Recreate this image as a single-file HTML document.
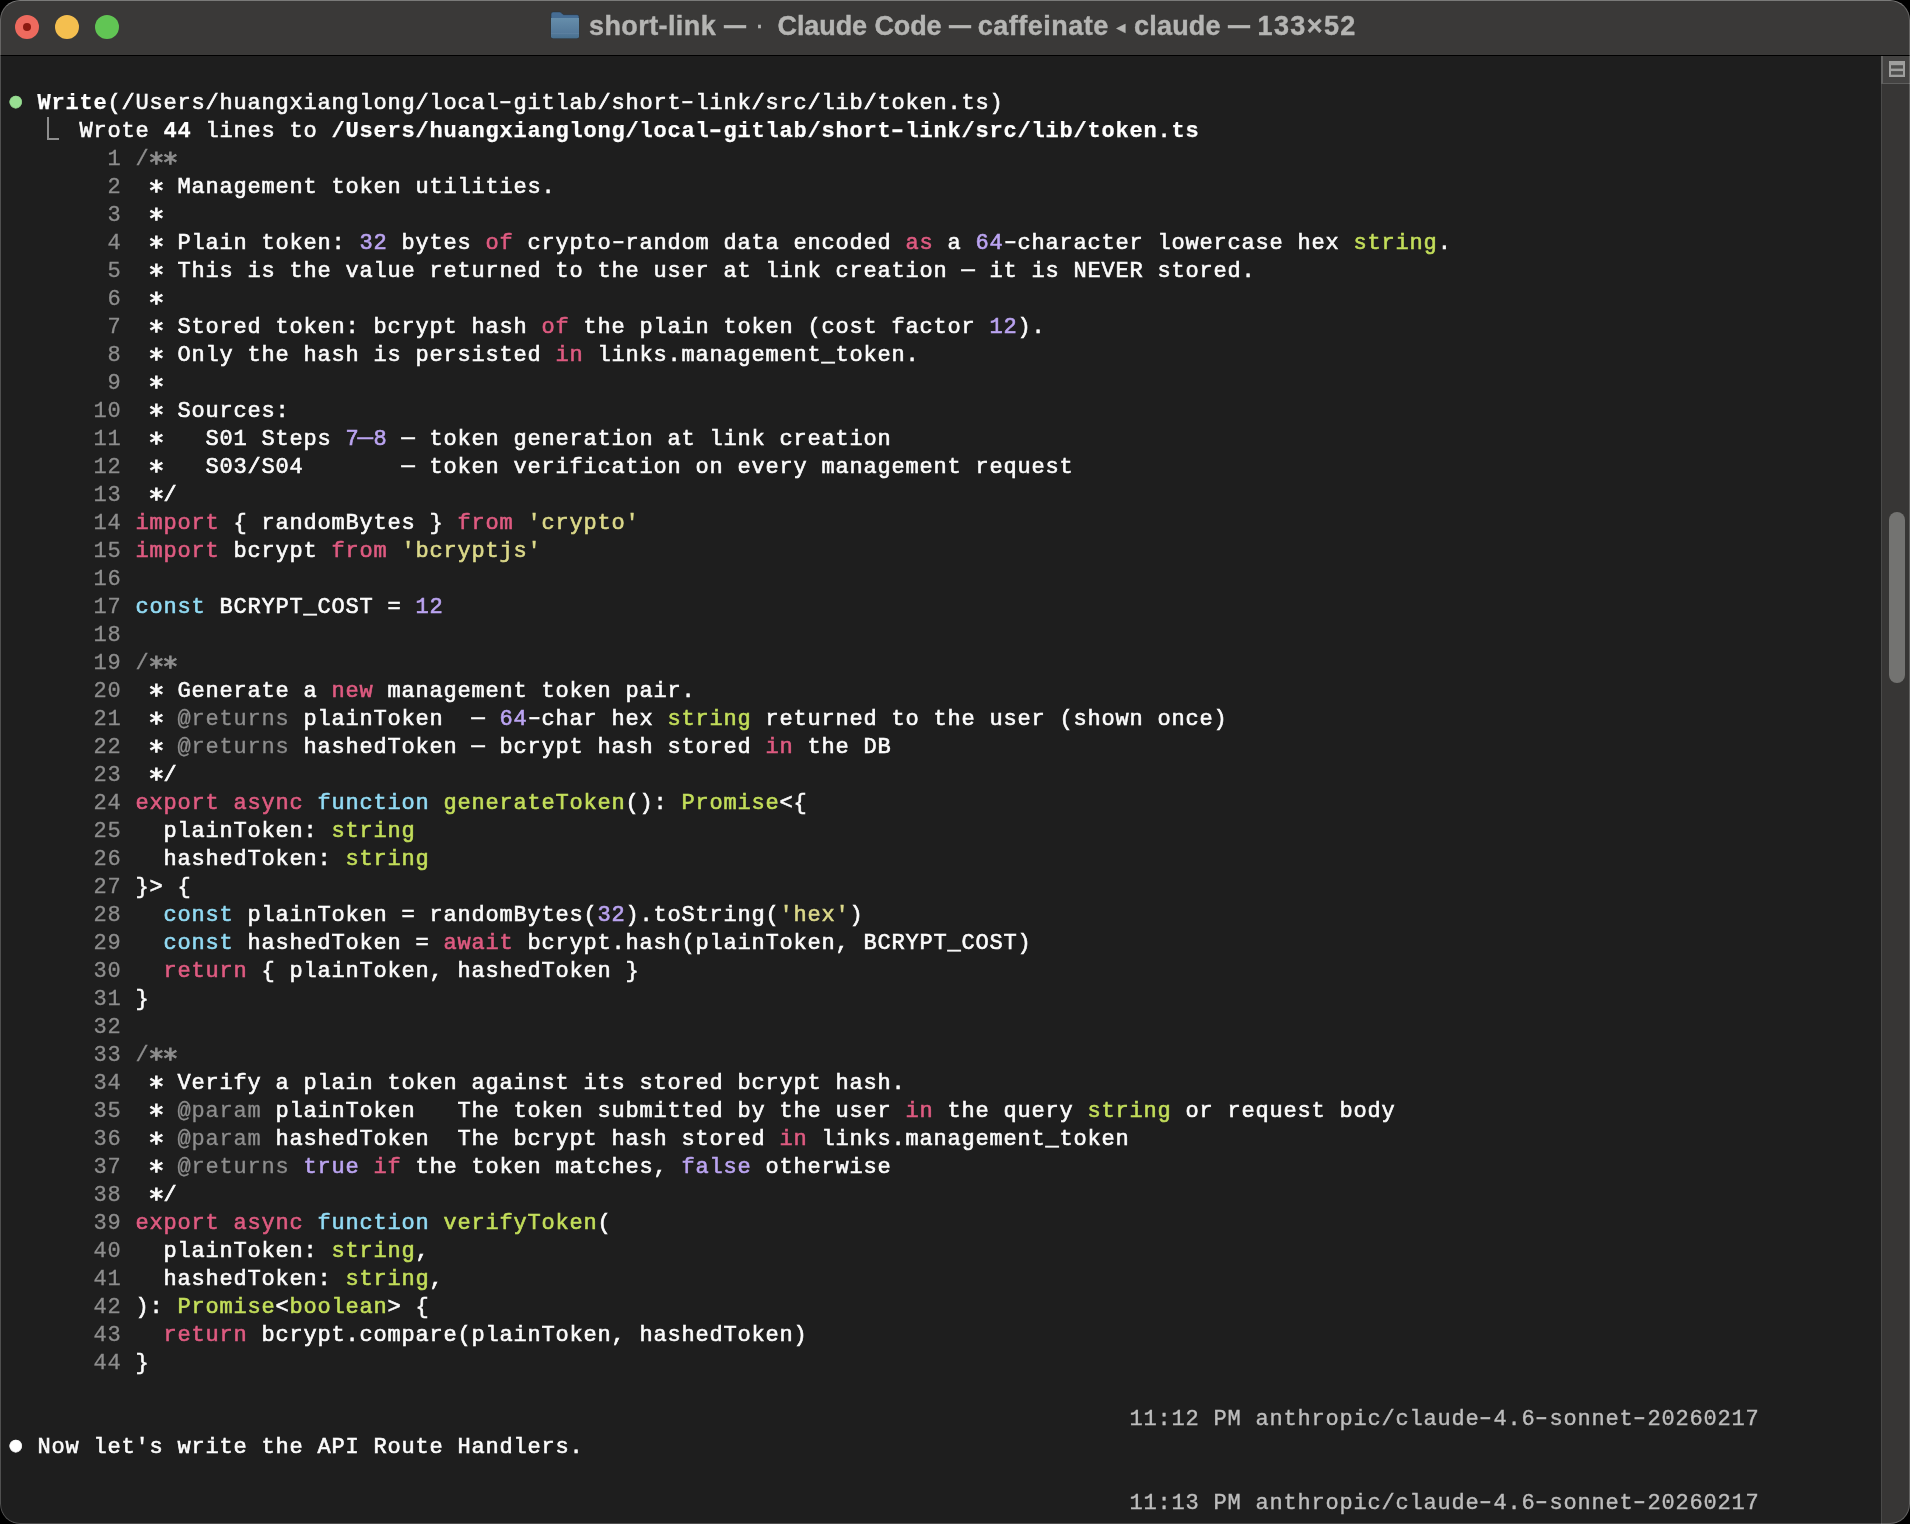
<!DOCTYPE html>
<html lang="en">
<head>
<meta charset="utf-8">
<title>short-link — Claude Code</title>
<style>
html,body{margin:0;padding:0;background:#000;}
body{width:1910px;height:1524px;overflow:hidden;position:relative;}
#win{position:absolute;left:0;top:0;width:1910px;height:1524px;box-sizing:border-box;border-radius:20px;overflow:hidden;background:#1e1e1e;}
#win::after{content:"";position:absolute;left:0;top:0;right:0;bottom:0;border-radius:20px;border:1px solid rgba(255,255,255,0.22);border-top-color:rgba(255,255,255,0.33);box-sizing:border-box;pointer-events:none;z-index:10;}
#bar{position:absolute;left:0;top:0;width:1910px;height:55px;background:#3a3938;}
#barline{position:absolute;left:0;top:55px;width:1910px;height:1px;background:#000;}
.tl{position:absolute;top:15px;width:24px;height:24px;border-radius:50%;}
#tl-r{left:15px;background:#ed6a5e;}
#tl-r::after{content:"";position:absolute;left:8px;top:8px;width:8px;height:8px;border-radius:50%;background:#8c1a10;}
#tl-y{left:55px;background:#f4bf4f;}
#tl-g{left:95px;background:#61c554;}
#title{will-change:transform;position:absolute;top:0;left:0;width:1910px;height:55px;font-family:"Liberation Sans","DejaVu Sans",sans-serif;font-weight:bold;font-size:27px;color:#b5b5b3;white-space:pre;-webkit-text-stroke:0.4px;}
#folder{position:absolute;left:550px;top:11px;width:30px;height:28px;}
#sb{position:absolute;left:1881px;top:56px;width:29px;height:1468px;background:#373635;border-left:1px solid #4a4a49;box-sizing:border-box;}
#split{position:absolute;left:-1px;top:0;width:29px;height:28px;background:#444342;border-bottom:1.5px solid #5e5e5d;border-left:2px solid #636362;box-sizing:border-box;}
#spliticon{position:absolute;left:6px;top:5px;width:16px;height:16px;}
#thumb{position:absolute;left:6.7px;top:456px;width:16.4px;height:171px;border-radius:8px;background:#737371;}
#term{will-change:transform;position:absolute;left:0;top:0;width:1881px;height:1524px;font-family:"Liberation Mono","DejaVu Sans Mono",monospace;font-size:22.00px;letter-spacing:0.7979px;color:#fcfcfc;-webkit-text-stroke:0.6px;}
.r{position:absolute;left:9.4px;height:28px;line-height:28px;white-space:pre;}
.b{font-weight:bold;color:#fff;-webkit-text-stroke:0.25px;}
.k{color:#df5b81;}
.n{color:#bba4f1;}
.t{color:#c3de5a;}
.c{color:#92dbf4;}
.s{color:#dcd98a;}
.d{color:#8e8e8e;-webkit-text-stroke:0.3px;}
.ts{color:#bdbdbd;-webkit-text-stroke:0.4px;}
.g{color:#98de92;}
.w{color:#fff;}
.hook{position:absolute;left:47px;top:117px;width:12px;height:23px;border-left:2px solid #8e8e8e;border-bottom:2px solid #8e8e8e;box-sizing:border-box;}
.dot{display:inline-block;letter-spacing:0;width:14px;text-align:center;font-size:28px;line-height:0;position:relative;left:-2px;top:0.5px;}
.a{display:inline-block;letter-spacing:0;width:14px;text-align:center;font-family:"DejaVu Sans Mono",monospace;font-size:27px;line-height:0;position:relative;top:7.4px;left:-1.2px;-webkit-text-stroke:0.9px;}
.tp{position:absolute;top:0;height:55px;line-height:52px;}
.td{transform:scaleX(0.815);transform-origin:0 50%;top:-1px;}
.tri{font-family:"DejaVu Sans",sans-serif;font-size:17.5px;line-height:55px;}
.h{display:inline-block;transform:scaleX(1.5);position:relative;top:-1px;}
.e{display:inline-block;position:relative;top:-1px;}
.en{display:inline-block;position:relative;top:-1px;transform:scaleX(1.6);}

</style>
</head>
<body>
<div id="win">
<div id="bar">
<div class="tl" id="tl-r"></div><div class="tl" id="tl-y"></div><div class="tl" id="tl-g"></div>
<svg id="folder" viewBox="0 0 30 28"><defs><linearGradient id="fg" x1="0" y1="0" x2="0" y2="1"><stop offset="0" stop-color="#668eab"/><stop offset="0.75" stop-color="#54799a"/><stop offset="1" stop-color="#48708f"/></linearGradient></defs><path d="M1 3 Q1 0.9 3 0.9 L9.6 0.9 Q10.6 0.9 11.4 1.8 L12.6 3.1 Q13.2 3.66 14 3.66 L27 3.66 Q29 3.66 29 5.6 L29 25.2 Q29 27.15 27 27.15 L3 27.15 Q1 27.15 1 25.2 Z" fill="#466d94" stroke="#26323d" stroke-opacity="0.7" stroke-width="0.8"/><path d="M1 6.9 L29 6.9 L29 25.2 Q29 27.15 27 27.15 L3 27.15 Q1 27.15 1 25.2 Z" fill="url(#fg)"/><rect x="1" y="22" width="28" height="0.6" fill="#6a90ac" opacity="0.6"/></svg>
<div id="title"><span class="tp" style="left:589px;letter-spacing:0.41px">short-link</span> <span class="tp td" style="left:723.7px">—</span> <span class="tp" style="left:755px;top:-1.5px;font-weight:normal">·</span> <span class="tp" style="left:777.5px;letter-spacing:-0.09px">Claude Code</span> <span class="tp td" style="left:949.1px">—</span> <span class="tp" style="left:977.8px;letter-spacing:0.5px">caffeinate</span> <span class="tp tri" style="left:1116.4px">◂</span> <span class="tp" style="left:1134px;letter-spacing:0.2px">claude</span> <span class="tp td" style="left:1228px">—</span> <span class="tp" style="left:1257.5px;letter-spacing:1.4px">133×52</span></div>
</div>
<div id="barline"></div>
<div id="sb"><div id="split"><svg id="spliticon" viewBox="0 0 16 16"><rect x="0" y="0" width="16" height="16" fill="#9f9f9e"/><rect x="2" y="4.2" width="12" height="3.4" fill="#50504f"/><rect x="2" y="10.1" width="12" height="3.6" fill="#50504f"/></svg></div><div id="thumb"></div></div>

<div id="term">
<div class="r" style="top:90px"><span class="g dot">●</span> <span class="b">Write</span>(/Users/huangxianglong/local<span class="h">-</span>gitlab/short<span class="h">-</span>link/src/lib/token.ts)</div>
<div class="r" style="top:118px">     Wrote <span class="b">44</span> lines to <span class="b">/Users/huangxianglong/local<span class="h">-</span>gitlab/short<span class="h">-</span>link/src/lib/token.ts</span></div>
<div class="r" style="top:146px"><span class="d">       1</span> <span class="d">/<span class="a">*</span><span class="a">*</span></span></div>
<div class="r" style="top:174px"><span class="d">       2</span>  <span class="a">*</span> Management token utilities.</div>
<div class="r" style="top:202px"><span class="d">       3</span>  <span class="a">*</span></div>
<div class="r" style="top:230px"><span class="d">       4</span>  <span class="a">*</span> Plain token: <span class="n">32</span> bytes <span class="k">of</span> crypto<span class="h">-</span>random data encoded <span class="k">as</span> a <span class="n">64</span><span class="h">-</span>character lowercase hex <span class="t">string</span>.</div>
<div class="r" style="top:258px"><span class="d">       5</span>  <span class="a">*</span> This is the value returned to the user at link creation <span class="e">—</span> it is NEVER stored.</div>
<div class="r" style="top:286px"><span class="d">       6</span>  <span class="a">*</span></div>
<div class="r" style="top:314px"><span class="d">       7</span>  <span class="a">*</span> Stored token: bcrypt hash <span class="k">of</span> the plain token (cost factor <span class="n">12</span>).</div>
<div class="r" style="top:342px"><span class="d">       8</span>  <span class="a">*</span> Only the hash is persisted <span class="k">in</span> links.management_token.</div>
<div class="r" style="top:370px"><span class="d">       9</span>  <span class="a">*</span></div>
<div class="r" style="top:398px"><span class="d">      10</span>  <span class="a">*</span> Sources:</div>
<div class="r" style="top:426px"><span class="d">      11</span>  <span class="a">*</span>   S01 Steps <span class="n">7<span class="en">–</span>8</span> <span class="e">—</span> token generation at link creation</div>
<div class="r" style="top:454px"><span class="d">      12</span>  <span class="a">*</span>   S03/S04       <span class="e">—</span> token verification on every management request</div>
<div class="r" style="top:482px"><span class="d">      13</span>  <span class="a">*</span>/</div>
<div class="r" style="top:510px"><span class="d">      14</span> <span class="k">import</span> { randomBytes } <span class="k">from</span> <span class="s">'crypto'</span></div>
<div class="r" style="top:538px"><span class="d">      15</span> <span class="k">import</span> bcrypt <span class="k">from</span> <span class="s">'bcryptjs'</span></div>
<div class="r" style="top:566px"><span class="d">      16</span> </div>
<div class="r" style="top:594px"><span class="d">      17</span> <span class="c">const</span> BCRYPT_COST = <span class="n">12</span></div>
<div class="r" style="top:622px"><span class="d">      18</span> </div>
<div class="r" style="top:650px"><span class="d">      19</span> <span class="d">/<span class="a">*</span><span class="a">*</span></span></div>
<div class="r" style="top:678px"><span class="d">      20</span>  <span class="a">*</span> Generate a <span class="k">new</span> management token pair.</div>
<div class="r" style="top:706px"><span class="d">      21</span>  <span class="a">*</span> <span class="d">@returns</span> plainToken  <span class="e">—</span> <span class="n">64</span><span class="h">-</span>char hex <span class="t">string</span> returned to the user (shown once)</div>
<div class="r" style="top:734px"><span class="d">      22</span>  <span class="a">*</span> <span class="d">@returns</span> hashedToken <span class="e">—</span> bcrypt hash stored <span class="k">in</span> the DB</div>
<div class="r" style="top:762px"><span class="d">      23</span>  <span class="a">*</span>/</div>
<div class="r" style="top:790px"><span class="d">      24</span> <span class="k">export</span> <span class="k">async</span> <span class="c">function</span> <span class="t">generateToken</span>(): <span class="t">Promise</span>&lt;{</div>
<div class="r" style="top:818px"><span class="d">      25</span>   plainToken: <span class="t">string</span></div>
<div class="r" style="top:846px"><span class="d">      26</span>   hashedToken: <span class="t">string</span></div>
<div class="r" style="top:874px"><span class="d">      27</span> }&gt; {</div>
<div class="r" style="top:902px"><span class="d">      28</span>   <span class="c">const</span> plainToken = randomBytes(<span class="n">32</span>).toString(<span class="s">'hex'</span>)</div>
<div class="r" style="top:930px"><span class="d">      29</span>   <span class="c">const</span> hashedToken = <span class="k">await</span> bcrypt.hash(plainToken, BCRYPT_COST)</div>
<div class="r" style="top:958px"><span class="d">      30</span>   <span class="k">return</span> { plainToken, hashedToken }</div>
<div class="r" style="top:986px"><span class="d">      31</span> }</div>
<div class="r" style="top:1014px"><span class="d">      32</span> </div>
<div class="r" style="top:1042px"><span class="d">      33</span> <span class="d">/<span class="a">*</span><span class="a">*</span></span></div>
<div class="r" style="top:1070px"><span class="d">      34</span>  <span class="a">*</span> Verify a plain token against its stored bcrypt hash.</div>
<div class="r" style="top:1098px"><span class="d">      35</span>  <span class="a">*</span> <span class="d">@param</span> plainToken   The token submitted by the user <span class="k">in</span> the query <span class="t">string</span> or request body</div>
<div class="r" style="top:1126px"><span class="d">      36</span>  <span class="a">*</span> <span class="d">@param</span> hashedToken  The bcrypt hash stored <span class="k">in</span> links.management_token</div>
<div class="r" style="top:1154px"><span class="d">      37</span>  <span class="a">*</span> <span class="d">@returns</span> <span class="n">true</span> <span class="k">if</span> the token matches, <span class="n">false</span> otherwise</div>
<div class="r" style="top:1182px"><span class="d">      38</span>  <span class="a">*</span>/</div>
<div class="r" style="top:1210px"><span class="d">      39</span> <span class="k">export</span> <span class="k">async</span> <span class="c">function</span> <span class="t">verifyToken</span>(</div>
<div class="r" style="top:1238px"><span class="d">      40</span>   plainToken: <span class="t">string</span>,</div>
<div class="r" style="top:1266px"><span class="d">      41</span>   hashedToken: <span class="t">string</span>,</div>
<div class="r" style="top:1294px"><span class="d">      42</span> ): <span class="t">Promise</span>&lt;<span class="t">boolean</span>&gt; {</div>
<div class="r" style="top:1322px"><span class="d">      43</span>   <span class="k">return</span> bcrypt.compare(plainToken, hashedToken)</div>
<div class="r" style="top:1350px"><span class="d">      44</span> }</div>
<div class="r" style="top:1406px">                                                                                <span class="ts">11:12 PM anthropic/claude<span class="h">-</span>4.6<span class="h">-</span>sonnet<span class="h">-</span>20260217</span></div>
<div class="r" style="top:1434px"><span class="w dot">●</span> Now let's write the API Route Handlers.</div>
<div class="r" style="top:1490px">                                                                                <span class="ts">11:13 PM anthropic/claude<span class="h">-</span>4.6<span class="h">-</span>sonnet<span class="h">-</span>20260217</span></div>
<span class="hook" aria-hidden="true"></span>
</div>
</div>
</body>
</html>
